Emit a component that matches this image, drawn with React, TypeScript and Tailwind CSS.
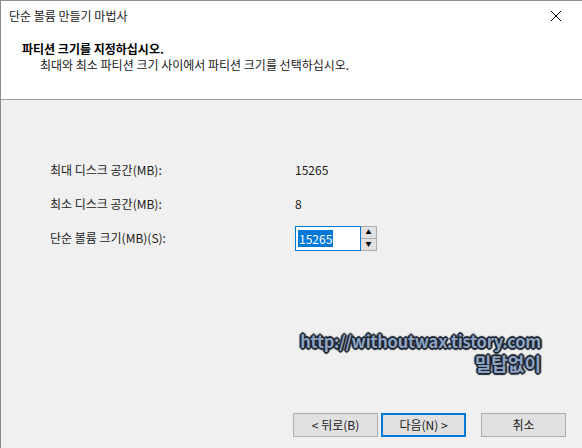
const font = { fontFamily: '"Noto Sans CJK KR", "Liberation Sans", sans-serif' };

const outline =
  "-1px -1px 0 #1c2430, 1px -1px 0 #1c2430, -1px 1px 0 #1c2430, 1px 1px 0 #1c2430, 0 2px 1px #1c2430, 2px 0 1px #1c2430, -2px 0 1px #1c2430, 0 -2px 1px #1c2430";

function Row({ label, children }: { label: string; children: React.ReactNode }) {
  return (
    <div className="flex h-[34px] items-center">
      <div className="w-[294px] pl-[49px] text-[12px] text-[#1a1a1a]">{label}</div>
      <div className="text-[12px] text-[#1a1a1a]">{children}</div>
    </div>
  );
}

function Spinner() {
  return (
    <div className="flex h-[25px] items-stretch">
      <div className="flex w-[66px] items-center border border-[#0078d7] bg-white pl-[2px]">
        <span className="bg-[#0078d7] px-[1px] leading-[17px] text-white">15265</span>
      </div>
      <div className="flex w-[16px] flex-col border border-l-0 border-[#adadad] bg-[#e1e1e1]">
        <div className="flex flex-1 items-center justify-center border-b border-[#adadad] text-[6px] leading-none text-black">▲</div>
        <div className="flex flex-1 items-center justify-center text-[6px] leading-none text-black">▼</div>
      </div>
    </div>
  );
}

function Button({ label, primary }: { label: string; primary?: boolean }) {
  return (
    <div
      className={
        "flex h-[24px] w-[85px] items-center justify-center bg-[#e1e1e1] text-[12px] text-[#1a1a1a] " +
        (primary ? "border-2 border-[#0078d7]" : "border border-[#adadad]")
      }
    >
      {label}
    </div>
  );
}

export default function App() {
  return (
    <div style={font} className="flex h-[448px] w-[582px] flex-col border-l border-t border-[#8c8c8c] bg-[#f0f0f0]">
      <div className="h-[99px] border-b border-[#a0a0a0] bg-white">
        <div className="flex h-[30px] items-center justify-between pl-[8px] pr-[20px]">
          <span className="text-[12px] text-[#1a1a1a]">단순 볼륨 만들기 마법사</span>
          <svg width="12" height="12" viewBox="0 0 12 12" className="text-black">
            <path d="M1 1 L11 11 M11 1 L1 11" stroke="currentColor" strokeWidth="1" />
          </svg>
        </div>
        <div className="pl-[21px] pt-[10px] text-[12px] font-bold leading-[16px] text-black">파티션 크기를 지정하십시오.</div>
        <div className="pl-[39px] text-[12px] leading-[16px] text-[#1a1a1a]">최대와 최소 파티션 크기 사이에서 파티션 크기를 선택하십시오.</div>
      </div>
      <div className="flex flex-1 flex-col">
        <div className="pt-[53px]">
          <Row label="최대 디스크 공간(MB):">15265</Row>
          <Row label="최소 디스크 공간(MB):">8</Row>
          <Row label="단순 볼륨 크기(MB)(S):">
            <Spinner />
          </Row>
        </div>
        <div className="flex flex-col items-end pr-[41px] pt-[78px]">
          <span
            className="text-[16.5px] font-bold leading-[17px] tracking-[-0.2px] text-[#8ea4c4]"
            style={{ textShadow: outline }}
          >
            http://withoutwax.tistory.com
          </span>
          <span
            className="mt-[4px] text-[18px] font-bold leading-[18px] text-[#8ea4c4]"
            style={{ textShadow: outline }}
          >
            밀탑없이
          </span>
        </div>
        <div className="mt-auto flex justify-end gap-[3px] pb-[11px] pr-[16px]">
          <Button label="< 뒤로(B)" />
          <Button label="다음(N) >" primary />
          <div className="w-[9px]" />
          <Button label="취소" />
        </div>
      </div>
    </div>
  );
}
